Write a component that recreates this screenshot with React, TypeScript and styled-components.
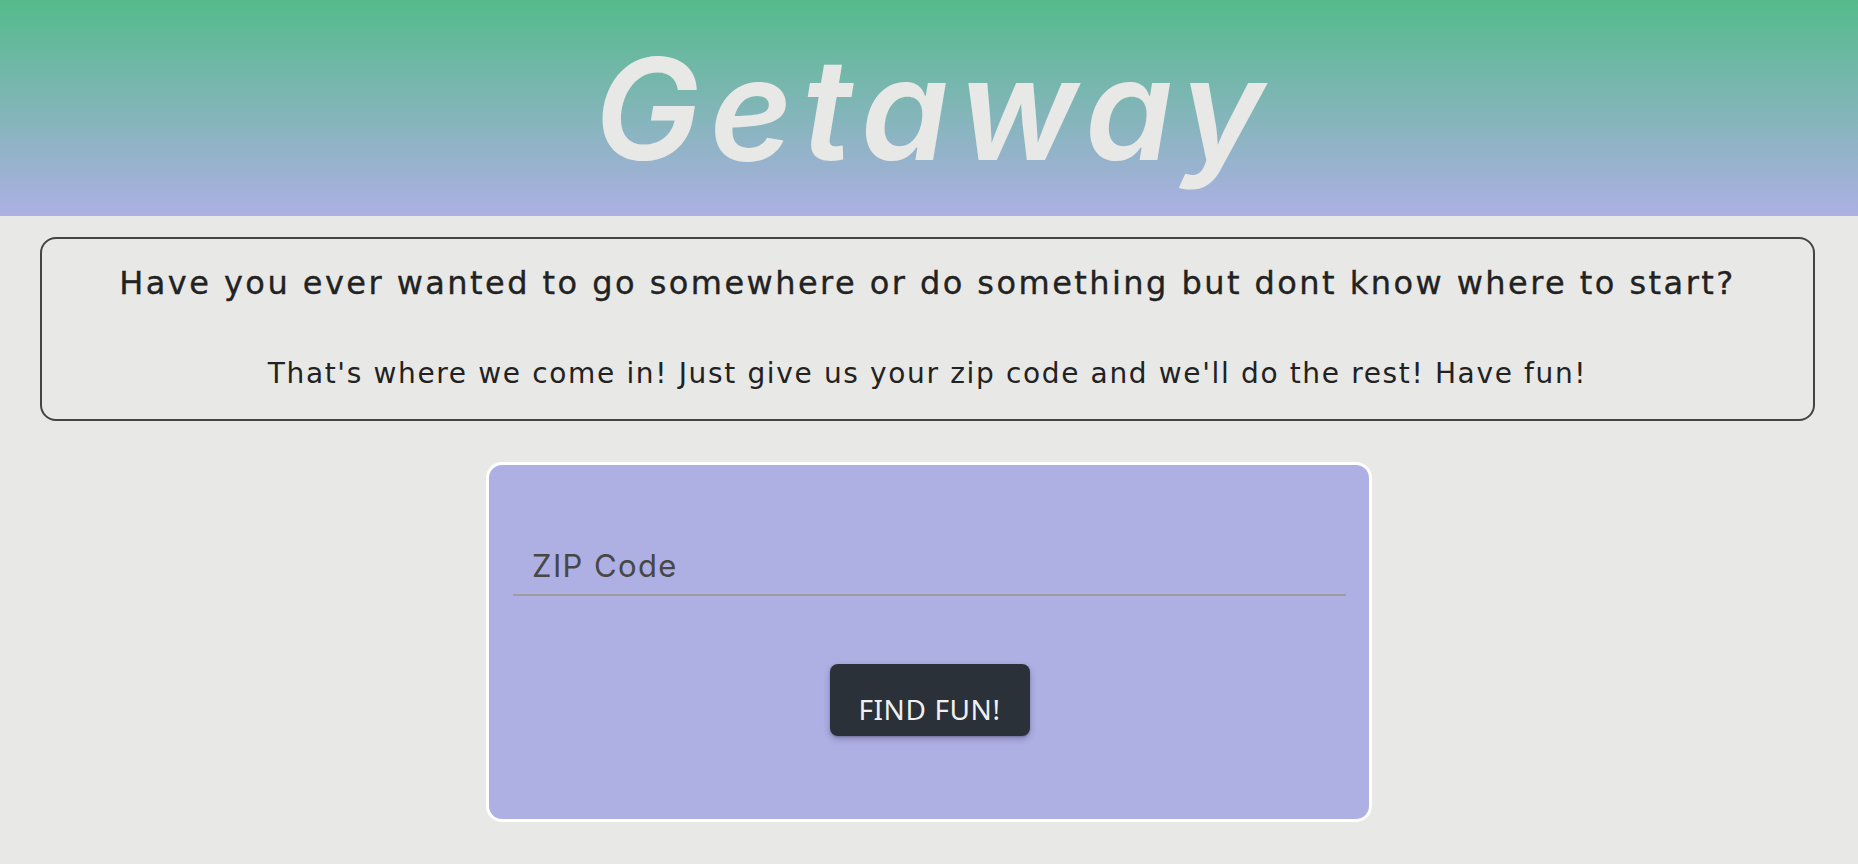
import React from "react";
import styled, { createGlobalStyle } from "styled-components";

const GlobalStyle = createGlobalStyle`
  html, body {
    margin: 0;
    padding: 0;
    background: #e8e8e6;
    font-family: "DejaVu Sans", Inter, "Liberation Sans", sans-serif;
    color: #222;
  }
  * { box-sizing: border-box; }
`;

const Page = styled.div`
  display: flex;
  flex-direction: column;
  min-height: 864px;
  background: #e8e8e6;
`;

const Header = styled.header`
  height: 216px;
  display: flex;
  justify-content: center;
  align-items: flex-start;
  padding-top: 39px;
  padding-left: 10px;
  background: linear-gradient(to bottom, #54bb8b 0%, #adb0e3 100%);
`;

const Title = styled.h1`
  margin: 0;
  font-family: Inter, "Open Sans", sans-serif;
  font-style: italic;
  font-weight: 600;
  font-size: 141px;
  line-height: 140px;
  letter-spacing: 10px;
  color: #e8e8e6;
`;

const Intro = styled.section`
  margin: 21px 43px 0 40px;
  border: 2px solid #444;
  border-radius: 16px;
  padding: 24px 10px 27px;
  display: flex;
  flex-direction: column;
  align-items: center;
  gap: 53px;
  text-align: center;
`;

const Lead = styled.h2`
  margin: 0;
  font-family: "DejaVu Sans", sans-serif;
  font-size: 32px;
  line-height: 40px;
  font-weight: 400;
  letter-spacing: 2.45px;
  -webkit-text-stroke: 0.35px #222;
  color: #222;
`;

const Sub = styled.p`
  margin: 0;
  font-family: "DejaVu Sans", sans-serif;
  font-size: 28px;
  line-height: 36px;
  font-weight: 400;
  letter-spacing: 1.65px;
  color: #222;
`;

const Card = styled.form`
  width: 886px;
  margin: 41px auto 0;
  background: #aeafe3;
  border: 3px solid #ffffff;
  border-radius: 16px;
  padding: 80px 23px 83px 24px;
  display: flex;
  flex-direction: column;
  align-items: center;
  gap: 68px;
`;

const ZipInput = styled.input`
  display: block;
  width: 100%;
  border: none;
  border-bottom: 2px solid #9e9e9e;
  background: transparent;
  outline: none;
  padding: 0 19px 9px;
  font-family: Inter, "Noto Sans", sans-serif;
  font-size: 31px;
  line-height: 40px;
  height: 51px;
  letter-spacing: 1.4px;
  color: #444;

  &::placeholder {
    color: #474747;
    opacity: 1;
  }
`;

const FindButton = styled.button`
  width: 200px;
  height: 72px;
  border: none;
  border-radius: 8px;
  background: #2b3139;
  color: #f0f0f0;
  font-family: "Noto Sans", "Open Sans", sans-serif;
  font-size: 28px;
  line-height: 38px;
  letter-spacing: 0.6px;
  padding: 26px 0 8px;
  text-transform: uppercase;
  box-shadow: 0 3px 6px rgba(40, 40, 80, 0.3), 0 1px 2px rgba(0, 0, 0, 0.2);
  cursor: pointer;
`;

export default function App() {
  return (
    <>
      <GlobalStyle />
      <Page>
        <Header>
          <Title>Getaway</Title>
        </Header>
        <Intro>
          <Lead>
            Have you ever wanted to go somewhere or do something but dont know
            where to start?
          </Lead>
          <Sub>
            That's where we come in! Just give us your zip code and we'll do the
            rest! Have fun!
          </Sub>
        </Intro>
        <Card onSubmit={(e) => e.preventDefault()}>
          <ZipInput type="text" placeholder="ZIP Code" />
          <FindButton type="submit">Find Fun!</FindButton>
        </Card>
      </Page>
    </>
  );
}
